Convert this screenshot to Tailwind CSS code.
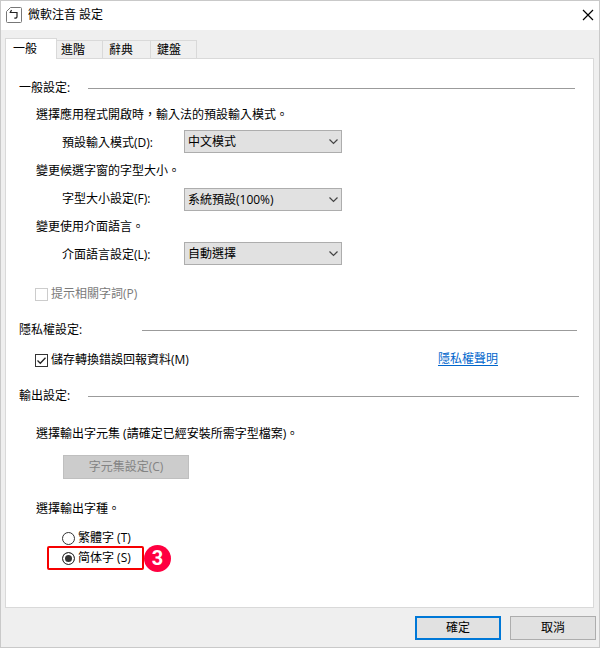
<!DOCTYPE html>
<html lang="zh-Hant">
<head>
    <meta charset="UTF-8">
    <meta name="viewport" content="width=device-width, initial-scale=1.0">
    <title>微軟注音 設定</title>
    <script src="https://cdn.jsdelivr.net/npm/@tailwindcss/browser@4"></script>
</head>
<body class="bg-[#efefef] text-black text-xs leading-5 font-['Open_Sans','Noto_Sans_CJK_TC',sans-serif]">
    <div class="min-h-screen flex flex-col border border-[#c9c9c9]">
        <!-- Title bar -->
        <header class="h-[29px] bg-white flex items-center px-[5px] pb-[2px] shrink-0">
            <svg class="w-4 h-4" viewBox="0 0 16 16" fill="none">
                <path d="M4.5 .5h10q1 0 1 1v13q0 1-1 1h-13q-1 0-1-1v-10z" stroke="#777" />
                <path d="M5.5 3L4.3 5.5H11V9.5q0 2-2.8 1.5" stroke="#222" stroke-width="1.2" />
            </svg>
            <h1 class="ml-[6px] flex-1">微軟注音 設定</h1>
            <button type="button" aria-label="關閉" class="w-3 h-3">
                <svg class="w-3 h-3" viewBox="0 0 12 12" fill="none" stroke="#000" stroke-width="1.2">
                    <path d="M1 1l10 10M11 1L1 11" />
                </svg>
            </button>
        </header>

        <!-- Tabs -->
        <nav class="mt-2 ml-1 flex items-end shrink-0">
            <button type="button" class="relative z-10 -mb-px w-[52px] h-[21px] pl-[7px] bg-white border border-b-0 border-[#d9d9d9] text-left leading-4">一般</button>
            <button type="button" class="w-[46px] h-[18px] pl-1 border-t border-r border-[#d9d9d9] text-left leading-4">進階</button>
            <button type="button" class="w-12 h-[18px] pl-[6px] border-t border-r border-[#d9d9d9] text-left leading-4">辭典</button>
            <button type="button" class="w-[46px] h-[18px] pl-[6px] border-t border-r border-[#d9d9d9] text-left leading-4">鍵盤</button>
        </nav>

        <!-- Panel -->
        <main class="flex-1 ml-1 mr-[5px] pl-[13px] pt-[19px] bg-white border border-[#d9d9d9]">
            <section>
                <div class="flex items-center mr-[18px]">
                    <h2 class="w-[69px]">一般設定:</h2>
                    <div class="flex-1 h-px bg-[#9b9b9b]"></div>
                </div>
                <p class="ml-[17px] mt-[7px]">選擇應用程式開啟時，輸入法的預設輸入模式。</p>
                <div class="ml-[43px] mt-1 h-7 flex items-center">
                    <label for="inputMode" class="w-[122px]">預設輸入模式(D):</label>
                    <div class="relative -mt-1">
                        <select id="inputMode" class="block appearance-none w-[158px] h-[23px] pl-[3px] pt-px bg-[#e1e1e1] border border-[#adadad]">
                            <option>中文模式</option>
                        </select>
                        <svg class="absolute right-1 top-2 w-[9px] h-[7px] pointer-events-none" viewBox="0 0 9 7" fill="none" stroke="#444" stroke-width="1.2"><path d="M.5 1.5l4 4 4-4" /></svg>
                    </div>
                </div>
                <p class="ml-[17px] mt-1">變更候選字窗的字型大小。</p>
                <div class="ml-[43px] mt-1 h-7 flex items-center">
                    <label for="fontSize" class="w-[122px]">字型大小設定(F):</label>
                    <div class="relative">
                        <select id="fontSize" class="block appearance-none w-[158px] h-[23px] pl-[3px] pt-px bg-[#e1e1e1] border border-[#adadad]">
                            <option>系統預設(100%)</option>
                        </select>
                        <svg class="absolute right-1 top-2 w-[9px] h-[7px] pointer-events-none" viewBox="0 0 9 7" fill="none" stroke="#444" stroke-width="1.2"><path d="M.5 1.5l4 4 4-4" /></svg>
                    </div>
                </div>
                <p class="ml-[17px] mt-1">變更使用介面語言。</p>
                <div class="ml-[43px] mt-1 h-7 flex items-center">
                    <label for="uiLanguage" class="w-[122px]">介面語言設定(L):</label>
                    <div class="relative -mt-1">
                        <select id="uiLanguage" class="block appearance-none w-[158px] h-[23px] pl-[3px] pt-px bg-[#e1e1e1] border border-[#adadad]">
                            <option>自動選擇</option>
                        </select>
                        <svg class="absolute right-1 top-2 w-[9px] h-[7px] pointer-events-none" viewBox="0 0 9 7" fill="none" stroke="#444" stroke-width="1.2"><path d="M.5 1.5l4 4 4-4" /></svg>
                    </div>
                </div>
                <div class="ml-4 mt-[15px] flex items-center text-[#7a7a7a]">
                    <input id="hint" type="checkbox" disabled class="appearance-none w-[13px] h-[13px] bg-white border border-[#cccccc]">
                    <label for="hint" class="ml-[3px]">提示相關字詞(P)</label>
                </div>
            </section>

            <section class="mt-4">
                <div class="flex items-center mr-4">
                    <h2 class="w-[123px]">隱私權設定:</h2>
                    <div class="flex-1 h-px bg-[#9b9b9b]"></div>
                </div>
                <div class="ml-4 mt-[10px] mr-[95px] flex items-center">
                    <div class="grid">
                        <input id="report" type="checkbox" checked class="col-start-1 row-start-1 appearance-none w-[13px] h-[13px] bg-white border border-[#333333]">
                        <svg class="col-start-1 row-start-1 w-[13px] h-[13px] pointer-events-none" viewBox="0 0 13 13" fill="none" stroke="#222" stroke-width="1.3"><path d="M2.5 6.5l2.8 2.8 5.2-5.6" /></svg>
                    </div>
                    <label for="report" class="ml-[3px] flex-1">儲存轉換錯誤回報資料(M)</label>
                    <a href="#" class="-mt-[2px] text-[#0066cc] underline underline-offset-2">隱私權聲明</a>
                </div>
            </section>

            <section class="mt-4">
                <div class="flex items-center mr-[14px]">
                    <h2 class="w-[69px]">輸出設定:</h2>
                    <div class="flex-1 h-px bg-[#9b9b9b]"></div>
                </div>
                <p class="ml-[17px] mt-[18px]">選擇輸出字元集 (請確定已經安裝所需字型檔案)。</p>
                <button type="button" disabled class="block ml-11 mt-[11px] w-[126px] h-6 bg-[#cccccc] border border-[#bfbfbf] text-[#838383]">字元集設定(C)</button>
                <p class="ml-[17px] mt-5">選擇輸出字種。</p>
                <div class="ml-[43px] mt-[9px] flex items-center">
                    <input id="traditional" type="radio" name="charset" class="appearance-none w-[13px] h-[13px] rounded-full bg-white border border-[#333333]">
                    <label for="traditional" class="ml-[3px]">繁體字 (T)</label>
                </div>
                <div class="relative ml-[43px] w-20 flex items-center">
                    <input id="simplified" type="radio" name="charset" checked class="appearance-none w-[13px] h-[13px] rounded-full bg-[#333333] border border-[#333333] ring-2 ring-inset ring-white">
                    <label for="simplified" class="ml-[3px]">简体字 (S)</label>
                    <div class="absolute -left-[15px] -right-[2px] -top-[2px] -bottom-[2px] border-2 border-[#f60000] rounded-xs pointer-events-none"></div>
                    <span class="absolute left-full ml-[2px] -top-[3px] w-[27px] h-[27px] rounded-full bg-[#ff0040] text-white text-xl leading-[27px] font-bold text-center font-['Roboto',sans-serif]">3</span>
                </div>
            </section>
        </main>

        <!-- Dialog buttons -->
        <footer class="flex justify-end gap-[9px] pt-2 pb-[7px] pr-[3px] shrink-0">
            <button type="button" class="w-[86px] h-6 bg-[#e1e1e1] border-2 border-[#0078d7] leading-4">確定</button>
            <button type="button" class="w-[86px] h-6 bg-[#e1e1e1] border border-[#adadad] leading-4">取消</button>
        </footer>
    </div>
</body>
</html>
